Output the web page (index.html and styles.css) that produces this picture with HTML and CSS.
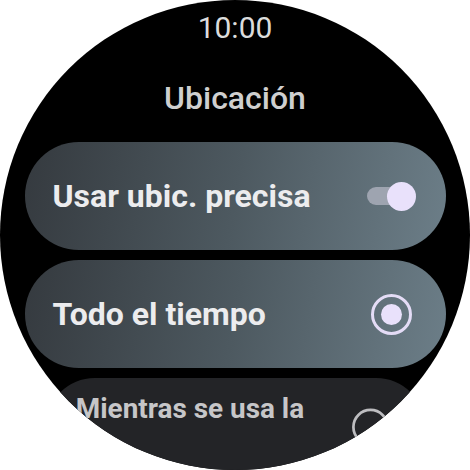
FILE: index.html
```html
<!DOCTYPE html>
<html lang="es">
<head>
<meta charset="utf-8">
<title>Ubicación</title>
<link rel="stylesheet" href="styles.css">
</head>
<body>
<div class="watch">
  <div class="screen">
    <div class="time">10:00</div>
    <div class="title">Ubicación</div>
    <div class="list">
      <div class="chip chip-on">
        <span class="label">Usar ubic. precisa</span>
        <span class="toggle"><span class="thumb"></span></span>
      </div>
      <div class="chip chip-on">
        <span class="label">Todo el tiempo</span>
        <span class="radio radio-on"><span class="dot"></span></span>
      </div>
      <div class="chip chip-off chip-scaled">
        <span class="label label-two">Mientras se usa la app</span>
        <span class="radio radio-off"></span>
      </div>
    </div>
  </div>
  <div class="vignette"></div>
</div>
</body>
</html>
```
FILE: styles.css
```css
html, body {
  margin: 0;
  padding: 0;
  background: #ffffff;
}
.watch {
  position: relative;
  width: 470px;
  height: 470px;
  border-radius: 50%;
  background: #000000;
  overflow: hidden;
  font-family: Roboto, "Noto Sans", sans-serif;
}
.screen {
  display: flex;
  flex-direction: column;
  align-items: center;
  padding-top: 13px;
}
.time {
  font-size: 30px;
  line-height: 30px;
  color: #dcdcdc;
  font-weight: 400;
}
.title {
  margin-top: 39px;
  font-size: 32px;
  line-height: 32px;
  font-weight: 500;
  color: #cfcfcf;
}
.list {
  margin-top: 28px;
  display: flex;
  flex-direction: column;
  gap: 10px;
  width: 421px;
}
.chip {
  box-sizing: border-box;
  height: 108px;
  border-radius: 54px;
  display: flex;
  align-items: center;
  justify-content: space-between;
  padding: 0 30px 0 28px;
}
.chip-on {
  background: linear-gradient(100deg, #353a3f 0%, #4d5960 50%, #6c7e88 100%);
}
.label {
  font-size: 32px;
  font-weight: 700;
  color: #ececee;
  letter-spacing: 0;
}
.toggle {
  position: relative;
  width: 48px;
  height: 18px;
  border-radius: 9px;
  background: #9ea4b0;
  margin-right: 1px;
}
.thumb {
  position: absolute;
  right: -1px;
  top: -5.5px;
  width: 29px;
  height: 29px;
  border-radius: 50%;
  background: #e9e1fb;
}
.radio {
  box-sizing: border-box;
  width: 41px;
  height: 41px;
  border-radius: 50%;
  display: flex;
  align-items: center;
  justify-content: center;
}
.radio-on {
  border: 3.5px solid #e4dcf6;
  margin-right: 4px;
}
.dot {
  width: 21px;
  height: 21px;
  border-radius: 50%;
  background: #e9e1fb;
}
.chip-off {
  background: #232427;
}
.chip-scaled {
  transform: scale(0.9);
  transform-origin: top center;
  padding-left: 33px;
  padding-right: 40px;
}
.label-two {
  width: 280px;
  font-size: 31px;
  line-height: 40px;
  color: #c6c6c8;
}
.radio-off {
  border: 3.5px solid #bdbdc0;
}
.vignette {
  position: absolute;
  inset: 0;
  border-radius: 50%;
  background: radial-gradient(circle at 50% 50%, rgba(0,0,0,0) 90%, rgba(0,0,0,0.8) 100%);
  pointer-events: none;
}
```
